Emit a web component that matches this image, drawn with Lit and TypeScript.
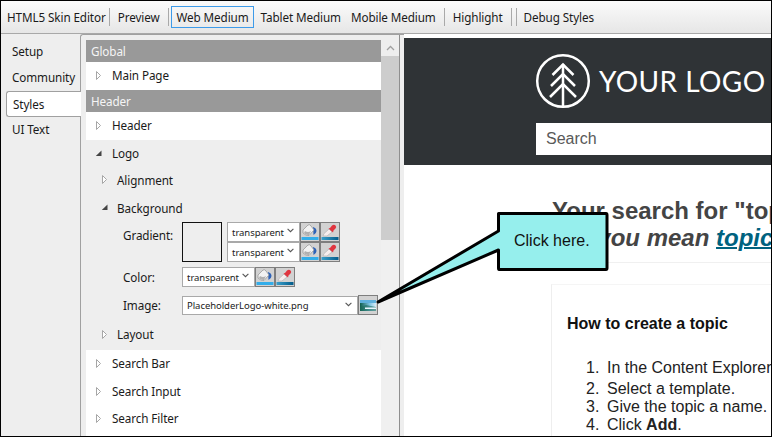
import { LitElement, html, css, svg } from "lit";
import { customElement } from "lit/decorators.js";

const arrowOpen = html`<svg class="arr" width="7" height="9" viewBox="0 0 7 9"><path d="M1.5 .5 L5.5 4.500 L1.5 8.500Z" fill="#fff" stroke="#a6a6a6"/></svg>`;
const arrowDown = html`<svg class="arr" width="7" height="9" viewBox="0 0 7 9"><path d="M6.500 1.500 V7 H.8Z" fill="#444"/></svg>`;
const chev = html`<svg class="chev" width="7" height="5" viewBox="0 0 7 5"><path d="M.6 .8 L3.500 3.700 L6.400 .8" fill="none" stroke="#555" stroke-width="1.100"/></svg>`;

const bucket = html`<span class="ib"><svg width="18" height="18" viewBox="0 0 18 18">
  <path d="M12 4 Q15.500 5 15.500 8 Q15.500 10.500 12.500 12 Z" fill="#2d62b8"/>
  <path d="M2 7 L7 2 Q9 1 10 3 L13 7 L8 12.500 Q5 13 2 10 Z" fill="#f2f2f2" stroke="#9a9a9a" stroke-width=".8"/>
  <path d="M4 8 Q7 10 10 8 L8 12 Q5 12.500 3 10Z" fill="#b0b0b0"/>
  <rect x="0.500" y="14" width="17" height="3" fill="#33ade9"/>
</svg></span>`;
const picker = html`<span class="ib"><svg width="18" height="18" viewBox="0 0 18 18">
  <path d="M2 13 L3 10.500 L8 6 L11 9 L6 13 Z" fill="#f7eeee" stroke="#b9b9b9" stroke-width=".8"/>
  <path d="M7.500 5.500 L9 5 L11 2.500 Q13 .8 14.500 2.500 Q16 4 14.500 5.500 L12.500 7.500 L12 9.500 Z" fill="#e0353f"/>
  <defs><linearGradient id="bar" x1="0" x2="1"><stop offset="0" stop-color="#3aa0cc"/><stop offset="1" stop-color="#045c8a"/></linearGradient></defs>
  <rect x="0.500" y="14" width="17" height="3" fill="url(#bar)"/>
</svg></span>`;
const picture = html`<span class="ib"><svg width="16" height="11" viewBox="0 0 16 11">
  <defs><linearGradient id="g" x1="0" x2="1"><stop offset="0" stop-color="#0d5d4c"/><stop offset=".6" stop-color="#7fc3e2"/><stop offset="1" stop-color="#d8eefa"/></linearGradient></defs>
  <rect width="16" height="11" fill="url(#g)"/>
  <path d="M0 0 H16 V3 H0Z" fill="#5fb0dc"/>
  <path d="M0 7 L6 5 L16 7 V11 H0Z" fill="#1c6a58" opacity=".6"/>
  <rect x="5" y="7.500" width="11" height="1.500" fill="#e8f6ff"/>
</svg></span>`;

const colorRow = html`<div class="pick"><span class="sel short">transparent ${chev}</span>${bucket}${picker}</div>`;

@customElement("app-root")
export class AppRoot extends LitElement {
  static styles = css`
    :host { display: block; width: 772px; height: 437px; overflow: hidden; position: relative; box-sizing: border-box; background: #eeeeee;
      font-family: "Noto Sans", "Open Sans", sans-serif; font-size: 11.700px; color: #1a1a1a; border: 1px solid #000; }
    .bar { height: 33px; box-sizing: border-box; display: flex; align-items: center; background: linear-gradient(#fbfbfb, #e6e6e6); border-bottom: 1px solid #a8a8a8; white-space: nowrap; letter-spacing: -0.1px; }
    .sep { width: 1px; height: 18px; background: #a9a9a9; flex: none; }
    .bi { flex: none; }
    .b1 { margin-left: 6px; }
    .s1 { margin-left: 3px; }
    .b2 { margin-left: 8px; }
    .s2 { margin-left: 8px; }
    .b3 { margin-left: 2px; height: 22px; line-height: 20px; box-sizing: border-box; border: 1px solid #3d9be9; padding: 0 5px; width: 83px; }
    .b4 { margin-left: 7px; }
    .b5 { margin-left: 10px; }
    .s3 { margin-left: 8px; }
    .b6 { margin-left: 8px; }
    .s4 { margin-left: 8px; }
    .s5 { margin-left: 4px; }
    .b7 { margin-left: 7px; }
    .main { display: flex; height: 402px; }
    .tabs { width: 79px; flex: none; padding-top: 5px; box-sizing: border-box; display: flex; flex-direction: column; align-items: stretch; }
    .tab { height: 26px; line-height: 25px; padding-left: 11px; letter-spacing: -0.1px; }
    .tab.on { background: #fff; margin-left: 5px; padding-left: 6px; border: 1px solid #a0a0a0; border-right: none; border-radius: 3px 0 0 3px; line-height: 24px; box-sizing: border-box; position: relative; z-index: 2; margin-right: -1px; }
    .panel { flex: 1; display: flex; border-left: 1px solid #a0a0a0; border-top: 1px solid #a0a0a0; border-top-left-radius: 3px; padding: 5px 0 0 5px; min-width: 0; }
    .tree { width: 295px; flex: none; background: #fff; overflow: hidden; letter-spacing: -0.1px; }
    .head { height: 22px; line-height: 22px; background: #999; color: #f5f5f5; padding-left: 5px; }
    .row { display: flex; align-items: center; box-sizing: border-box; height: 28px; padding: 0 0 2px 9px; gap: 10px; }
    .row.sub { padding-left: 15px; gap: 9px; }
    .row.a { height: 27px; }
    .row.up2 { padding-bottom: 4px; }
    .row.f { height: 27px; padding-bottom: 3px; }
    .arr { flex: none; }
    .logo { background: #eee; height: 210px; display: flex; flex-direction: column; }
    .fields { height: 99px; flex: none; padding-left: 37px; display: grid; grid-template-columns: 59px auto; grid-template-rows: 45px 28px 20px; align-items: start; }
    .lab { line-height: 20px; }
    .lab.g { margin-top: 3px; }
    .gr { display: flex; align-items: flex-start; }
    .sw { width: 40px; height: 40px; border: 1px solid #111; box-sizing: border-box; margin-right: 5px; }
    .pick { display: flex; height: 20px; }
    .sel { display: flex; align-items: center; justify-content: space-between; box-sizing: border-box; height: 20px; border: 1px solid #a9a9a9; background: #fff; font-size: 9.500px; padding: 0 5px 0 4px; letter-spacing: -0.05px; white-space: nowrap; }
    .sel.short { width: 73px; }
    .sel.long { width: 176px; height: 19px; margin-top: 1px; }
    .chev { flex: none; margin-bottom: 3px; }
    .ib { width: 20px; height: 20px; box-sizing: border-box; border: 1px solid #7e7e7e; background: #d2d2d2; display: flex; align-items: center; justify-content: center; flex: none; }
    .stack { display: flex; flex-direction: column; }
    .scroll { width: 18px; flex: none; background: #f0f0f0; display: flex; flex-direction: column; }
    .up { height: 16px; flex: none; display: flex; align-items: center; justify-content: center; background: #eee; }
    .thumb { height: 184px; flex: none; background: #cdcdcd; }
    .split { width: 4px; flex: none; border-left: 1px solid #8f8f8f; margin-top: -5px; background: #eee; }
    .prev { flex: 1; min-width: 0; background: #fff; overflow: hidden; margin-top: -6px; padding-top: 4px; font-family: "Liberation Sans", Arial, sans-serif; color: #333; white-space: nowrap; }
    .dark { height: 127px; box-sizing: border-box; background: #2f3336; padding: 15px 0 0 131px; }
    .brand { display: flex; align-items: center; gap: 8px; height: 56px; color: #fff; font-family: "Lato", "Inter", sans-serif; font-size: 28px; letter-spacing: 0.4px; }
    .search { margin: 14px 0 0 1px; height: 32px; background: #fff; color: #595959; font-size: 16px; line-height: 32px; padding-left: 10px; }
    h1 { margin: 0; font-size: 24px; line-height: 27px; font-weight: 700; color: #444; }
    .h1a { padding: 32px 0 0 148px; }
    .h1b { padding-left: 148px; font-style: italic; }
    .h1b a { color: #00627f; text-decoration: underline; text-decoration-thickness: 2px; }
    .rule { margin: 11px 0 0 147px; height: 1px; background: #f0f0f0; }
    .card { margin: 21px 0 0 147px; border-left: 1px solid #eee; border-top: 1px solid #f5f5f5; padding: 30px 0 0 15px; height: 200px; color: #222; }
    .card h2 { margin: 0; font-size: 16px; line-height: 18px; color: #111; }
    ol { margin: 26px 0 0; padding: 0 0 0 19px; font-size: 16px; color: #222; list-style: none; counter-reset: n; }
    li { line-height: 18px; counter-increment: n; }
    li::before { content: counter(n) "."; display: inline-block; width: 21px; }
    li:first-child { margin-bottom: 3px; }
    .call { position: absolute; left: -1px; top: -1px; pointer-events: none; }
    .ctext { position: absolute; left: 513px; top: 230px; font: 16px/20px "Liberation Sans", Arial, sans-serif; color: #111; }
  `;

  row(t: string, cls = "") { return html`<div class="row ${cls}">${arrowOpen}<span>${t}</span></div>`; }

  render() {
    return html`
      <div class="bar">
        <span class="bi b1">HTML5 Skin Editor</span><span class="sep s1"></span>
        <span class="bi b2">Preview</span><span class="sep s2"></span>
        <span class="bi b3">Web Medium</span><span class="bi b4">Tablet Medium</span><span class="bi b5">Mobile Medium</span><span class="sep s3"></span>
        <span class="bi b6">Highlight</span><span class="sep s4"></span><span class="sep s5"></span><span class="bi b7">Debug Styles</span>
      </div>
      <div class="main">
        <div class="tabs">
          <div class="tab">Setup</div><div class="tab">Community</div><div class="tab on">Styles</div><div class="tab">UI Text</div>
        </div>
        <div class="panel">
          <div class="tree">
            <div class="head">Global</div>
            ${this.row("Main Page")}
            <div class="head">Header</div>
            ${this.row("Header")}
            <div class="logo">
              <div class="row">${arrowDown}<span>Logo</span></div>
              ${this.row("Alignment", "sub a up2")}
              <div class="row sub a">${arrowDown}<span>Background</span></div>
              <div class="fields">
                <span class="lab g">Gradient:</span>
                <div class="gr"><span class="sw"></span>
                  <div class="stack">${colorRow}${colorRow}</div></div>
                <span class="lab">Color:</span>
                ${colorRow}
                <span class="lab">Image:</span>
                <div class="pick"><span class="sel long">PlaceholderLogo-white.png ${chev}</span>${picture}</div>
              </div>
              ${this.row("Layout", "sub")}
            </div>
            ${this.row("Search Bar")}
            ${this.row("Search Input")}
            ${this.row("Search Filter", "f")}
          </div>
          <div class="scroll">
            <div class="up"><svg width="9" height="6" viewBox="0 0 9 6"><path d="M1 5 L4.500 1.500 L8 5" fill="none" stroke="#a0a0a0" stroke-width="1.300"/></svg></div>
            <div class="thumb"></div>
          </div>
          <div class="split"></div>
          <div class="prev">
            <div class="dark">
              <div class="brand">
                <svg width="56" height="56" viewBox="0 0 56 56" fill="none" stroke="#fff" stroke-width="2.500">
                  <circle cx="28" cy="28" r="25.800"/>
                  <path d="M28 11 V53"/>
                  <path d="M17.500 22 L28 11.500 L38.500 22 M16 33 L28 21 L40 33 M15 44 L28 31 L41 44"/>
                </svg>
                <span>YOUR LOGO</span>
              </div>
              <div class="search">Search</div>
            </div>
            <h1 class="h1a">Your search for "topic"</h1>
            <h1 class="h1b">Did you mean <a>topic</a>?</h1>
            <div class="rule"></div>
            <div class="card">
              <h2>How to create a topic</h2>
              <ol>
                <li>In the Content Explorer, right-click.</li>
                <li>Select a template.</li>
                <li>Give the topic a name.</li>
                <li>Click <b>Add</b>.</li>
              </ol>
            </div>
          </div>
        </div>
      </div>
      <svg class="call" width="772" height="437">${svg`
        <path d="M498.500 213.500 H606 Q607 213.500 607 215 V268 Q607 269.500 606 269.500 H499 Q498.500 269.500 498.500 268 V250 L378 302 L498.500 231 V215 Q498.500 213.500 498.500 213.500 Z" fill="#96efed" stroke="#000" stroke-width="3" stroke-linejoin="round"/>
      `}</svg>
      <div class="ctext">Click here.</div>
    `;
  }
}
